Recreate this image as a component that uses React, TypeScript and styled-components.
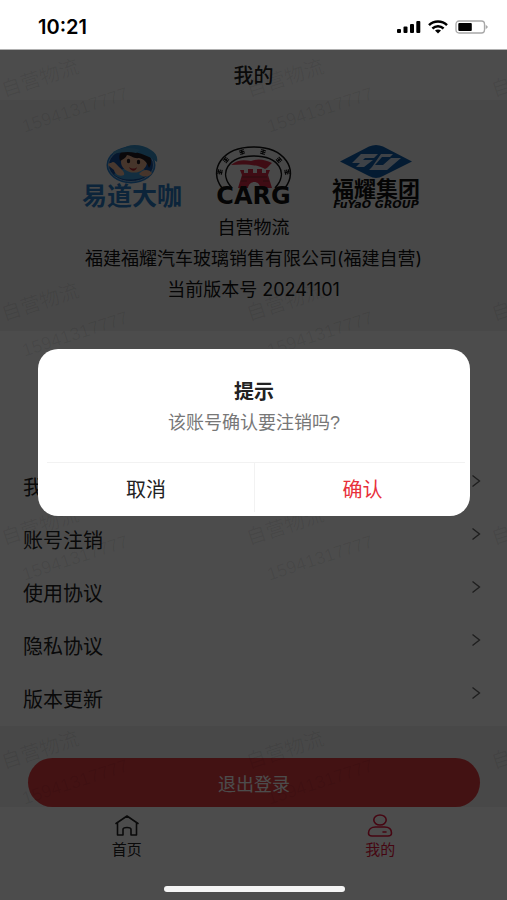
import React from "react";
import styled, { createGlobalStyle } from "styled-components";

const GlobalStyle = createGlobalStyle`
  *, *::before, *::after { box-sizing: border-box; }
  body {
    margin: 0;
    background: #fff;
    color: #222;
    font-family: "Liberation Sans", "Noto Sans CJK SC", sans-serif;
  }
  button { font-family: inherit; border: 0; background: none; padding: 0; cursor: pointer; }
`;

const Page = styled.div`
  min-height: 100vh;
  display: flex;
  flex-direction: column;
`;

const StatusBar = styled.header`
  height: 50px;
  padding: 4px 18px 0 38px;
  display: flex;
  align-items: center;
  justify-content: space-between;
  background: #fff;
  border-bottom: 1px solid #b0b0b0;
  color: #000;
`;

const Clock = styled.time`
  font: 600 20px/24px Inter, sans-serif;
`;

const StatusIcons = styled.div`
  display: flex;
  align-items: center;
  gap: 7px;
`;

const Screen = styled.div`
  position: relative;
  flex: 1;
  display: flex;
  flex-direction: column;
  overflow: hidden;
`;

const TitleBar = styled.h1`
  margin: 0;
  height: 50px;
  font-size: 20px;
  line-height: 52px;
  font-weight: 500;
  text-align: center;
`;

const Profile = styled.section`
  height: 231px;
  padding-top: 44px;
  background: #f1f1f1;
  text-align: center;
  color: #111;
`;

const Logos = styled.div`
  display: flex;
  justify-content: center;
  gap: 30px;
  height: 68px;
  svg { display: block; }
`;

const ProfileLine = styled.p`
  margin: 0;
  font-size: 18px;
  line-height: 31px;
  font-family: Inter, "Noto Sans CJK SC", sans-serif;
`;

const Menu = styled.nav`
  flex: 1;
  padding-top: 130px;
`;

const MenuItem = styled.button`
  width: 100%;
  height: 53px;
  padding: 0 26px 0 23px;
  display: flex;
  justify-content: space-between;
  align-items: center;
  font-size: 20px;
  line-height: 28px;
  color: #222;
  svg { margin-bottom: 14px; }
`;

const LogoutArea = styled.section`
  padding: 32px 27px 0 28px;
  background: #f1f1f1;
`;

const LogoutButton = styled.button`
  display: block;
  width: 100%;
  height: 49px;
  border-radius: 25px;
  background: #e23c40;
  color: #fff;
  font-size: 18px;
`;

const TabBar = styled.nav`
  height: 93px;
  padding-top: 7px;
  display: grid;
  grid-template-columns: 1fr 1fr;
  align-items: start;
`;

const Tab = styled.button<{ $active?: boolean }>`
  display: flex;
  flex-direction: column;
  align-items: center;
  gap: 2px;
  font-size: 15px;
  line-height: 20px;
  color: ${(p) => (p.$active ? "#e8143c" : "#222")};
`;

const Watermarks = styled.div`
  position: absolute;
  inset: 0;
  display: grid;
  grid-template-columns: repeat(3, 245px);
  grid-auto-rows: 224px;
  overflow: hidden;
  pointer-events: none;
  color: rgba(0, 0, 0, 0.07);
  font-size: 20px;
  line-height: 24px;
`;

const Watermark = styled.div`
  padding-top: 16px;
  display: flex;
  flex-direction: column;
  gap: 8px;
  span {
    width: max-content;
    transform: rotate(-18deg);
  }
  span + span { margin-left: 20px; font-size: 18px; }
`;

const Overlay = styled.div`
  position: absolute;
  inset: 0;
  padding: 0 37px 85px 38px;
  display: flex;
  align-items: center;
  background: rgba(0, 0, 0, 0.7);
`;

const Dialog = styled.section`
  width: 100%;
  padding: 28px 0 4px;
  border-radius: 20px;
  background: #fff;
  text-align: center;
`;

const DialogTitle = styled.h2`
  margin: 0;
  font-size: 20px;
  line-height: 30px;
  font-weight: 700;
`;

const DialogText = styled.p`
  margin: 1px 0 24px;
  font-size: 18px;
  line-height: 30px;
  color: #777;
`;

const DialogDivider = styled.hr`
  height: 1px;
  margin: 0 5px 0 9px;
  border: 0;
  background: #f2f2f2;
`;

const DialogActions = styled.div`
  display: grid;
  grid-template-columns: 1fr 1fr;
`;

const DialogButton = styled.button<{ $primary?: boolean }>`
  height: 49px;
  padding-top: 2px;
  font-size: 20px;
  color: ${(p) => (p.$primary ? "#e8303a" : "#222")};
  border-left: ${(p) => (p.$primary ? "1px solid #f2f2f2" : "0")};
`;

const HomeIndicator = styled.div`
  position: absolute;
  left: 50%;
  bottom: 8px;
  width: 181px;
  height: 6px;
  margin-left: -90px;
  border-radius: 3px;
  background: #f4f4f4;
`;

const SignalIcon = () => (
  <svg width="24" height="14" viewBox="0 0 24 14" aria-hidden="true">
    <rect x="0" y="9" width="4" height="4" rx="1" />
    <rect x="6.5" y="6.5" width="4" height="6.5" rx="1" />
    <rect x="13" y="4" width="4" height="9" rx="1" />
    <rect x="19.3" y="1" width="4" height="12" rx="1" />
  </svg>
);

const WifiIcon = () => (
  <svg width="20" height="14" viewBox="0 0 20 14" fill="none" stroke="#000" aria-hidden="true">
    <path d="M1 5.2C6 .4 14 .4 19 5.2" strokeWidth="2.5" />
    <path d="M4.4 8.5c3.2-3 8-3 11.2 0" strokeWidth="2.4" />
    <path d="M7 10.6c1.8-1.5 4.2-1.5 6 0l-3 2.8z" fill="#000" stroke="none" />
  </svg>
);

const BatteryIcon = () => (
  <svg width="34" height="14" viewBox="0 0 34 14" aria-hidden="true">
    <rect x="1" y="1" width="28.5" height="12" rx="3" fill="#fff" stroke="#a8a8a8" strokeWidth="1.3" />
    <rect x="3.3" y="3" width="13.5" height="8" rx="1" />
    <path d="M30.6 4.5 33 7l-2.4 2.5z" fill="#a8a8a8" />
  </svg>
);

const YidaoLogo = () => (
  <svg width="104" height="68" viewBox="0 0 104 68" role="img" aria-label="易道大咖">
    <ellipse cx="51" cy="21" rx="24.5" ry="18.5" fill="#2680d0" />
    <ellipse cx="51" cy="21" rx="22.5" ry="16.5" fill="#174e9c" stroke="#86b4dc" strokeWidth="1" />
    <path d="M34 30c4 7 28 8 35-1l-8-6-18 2z" fill="#409bd8" />
    <ellipse cx="54" cy="18" rx="13" ry="10.5" fill="#e9b391" />
    <path d="M40 17c-3-9 4-12 12-11l18 6c2 6 1 9-1 12-2-6-5-9-10-10-5 1-9-3-12-3-1 3-4 4-7 6z" fill="#241c22" />
    <path d="M41 6C48-1 62 0 71 6c5 3 7 7 6 12-9-7-21-11-36-12z" fill="#3690c8" />
    <path d="M33 8C41 3 52 3 60 6l-4 3c-7-2-15-1-23 1z" fill="#4c9cc9" />
    <ellipse cx="48.5" cy="17" rx="1.7" ry="2.2" fill="#241c22" />
    <ellipse cx="58.5" cy="18" rx="1.7" ry="2.2" fill="#241c22" />
    <path d="M49 23c3 2 6 2 8 0-1 5-6 5-8 0z" fill="#b42731" />
    <path d="M31 19c3-3 5 1 8 4s6 5 5 8c-5 2-9-1-10-5l-5-4c-2-2 0-3 2-3z" fill="#f0bd9d" />
    <path d="M59 30c4-5 10-5 13-1-2 4-8 5-13 1z" fill="#e9b391" />
    <text x="52" y="61" textAnchor="middle" fontSize="25" fontWeight="700" fontFamily="Noto Sans CJK SC, sans-serif" fill="#2b7bc2">易道大咖</text>
  </svg>
);

const RING_MARKS = [
  [6, 28, -80],
  [12, 16, -50],
  [28, 8, -20],
  [49, 8, 18],
  [65, 16, 48],
  [73, 28, 80],
];

const CargLogo = () => (
  <svg width="80" height="68" viewBox="0 0 80 68" role="img" aria-label="CARG">
    <g fill="none" stroke="#111" strokeWidth="1.5">
      <path d="M8 44C-6 26 8 3 39.5 3S85 26 71 44" />
      <path d="M18 44C4 29 14 12 39.5 12S75 29 61 44" />
    </g>
    {RING_MARKS.map(([x, y, r]) => (
      <g key={x} transform={`translate(${x} ${y}) rotate(${r})`} stroke="#111" strokeWidth="1.1">
        <path d="M-2.5-1.8h5M-2.5 0h5M-2.5 1.8h5M0-2.5v5" />
      </g>
    ))}
    <path d="M17 21c7-6 14-5 20-4 8-3 14-1 21 2-3 2-4 5-7 6-8-5-22-5-34-4z" fill="#d42b43" />
    <path d="M24 44l4-13-2-5h4v3h4v-4h5v4h4v-4h5v4h4v-3h4l-2 5 4 13H46c0-8-11-8-12 0z" fill="#d42b43" />
    <path d="M28 33h25M27 37h6m16 0h6" stroke="#8c2633" />
    <text x="39.5" y="60" textAnchor="middle" fontSize="24" fontWeight="700" fontFamily="DejaVu Sans, sans-serif" fill="#111">CARG</text>
  </svg>
);

const FuyaoLogo = () => (
  <svg width="104" height="68" viewBox="0 0 104 68" role="img" aria-label="福耀集团 FUYAO GROUP">
    <path d="M16 17.5 45 2.5q7-3 14 0l29 15L59 32q-7 4-14 0z" fill="#0f5ca8" />
    <path d="M37 10h17l-4 4h-9l-2 2h10l-9 7h-8l4-4h-8zM57 10h12l-3 3h-8l-7 8h8l8-7h10L63 26H45l3-3z" fill="#fff" opacity=".8" />
    <text x="52" y="53" textAnchor="middle" fontSize="22" fontWeight="700" fontFamily="Noto Sans CJK SC, sans-serif" fill="#111">福耀集团</text>
    <text x="52" y="64" textAnchor="middle" fontSize="11" fontWeight="700" fontStyle="italic" fontFamily="DejaVu Sans, sans-serif" fill="#111">FuYaO GROUP</text>
  </svg>
);

const ChevronIcon = () => (
  <svg width="10" height="14" viewBox="0 0 10 14" fill="none" stroke="#666" strokeWidth="1.4" aria-hidden="true">
    <path d="m1.5 1.5 7 5.5-7 5.5" />
  </svg>
);

const HomeIcon = () => (
  <svg width="26" height="24" viewBox="0 0 26 24" fill="none" stroke="currentColor" strokeWidth="1.6" strokeLinejoin="round" strokeLinecap="round" aria-hidden="true">
    <path d="M2 9.5 13 2 24 9.500M3.500 8.500V21H9v-5.500q0-2 4-2t4 2V21h5.500V8.500" />
  </svg>
);

const UserIcon = () => (
  <svg width="26" height="24" viewBox="0 0 26 24" fill="none" stroke="currentColor" strokeWidth="1.6" strokeLinecap="round" aria-hidden="true">
    <ellipse cx="13" cy="6" rx="6.2" ry="5" />
    <path d="M5 22h16q3.5 0 3.5-3c0-4-3-6-7-6h-9c-4 0-7 2-7 6q0 3 3.500 3zM16 18h3" />
  </svg>
);

const MENU_ITEMS = ["我的资料", "账号注销", "使用协议", "隐私协议", "版本更新"];

export default function App() {
  return (
    <>
      <GlobalStyle />
      <Page>
        <StatusBar>
          <Clock>10:21</Clock>
          <StatusIcons>
            <SignalIcon />
            <WifiIcon />
            <BatteryIcon />
          </StatusIcons>
        </StatusBar>
        <Screen>
          <TitleBar>我的</TitleBar>
          <Profile>
            <Logos>
              <YidaoLogo />
              <CargLogo />
              <FuyaoLogo />
            </Logos>
            <ProfileLine>自营物流</ProfileLine>
            <ProfileLine>福建福耀汽车玻璃销售有限公司(福建自营)</ProfileLine>
            <ProfileLine>当前版本号 20241101</ProfileLine>
          </Profile>
          <Menu>
            {MENU_ITEMS.map((label) => (
              <MenuItem key={label} type="button">
                {label}
                <ChevronIcon />
              </MenuItem>
            ))}
          </Menu>
          <LogoutArea>
            <LogoutButton type="button">退出登录</LogoutButton>
          </LogoutArea>
          <TabBar>
            <Tab type="button">
              <HomeIcon />
              首页
            </Tab>
            <Tab type="button" $active>
              <UserIcon />
              我的
            </Tab>
          </TabBar>
          <Watermarks aria-hidden="true">
            {Array.from({ length: 12 }, (_, i) => (
              <Watermark key={i}>
                <span>自营物流</span>
                <span>15941317777</span>
              </Watermark>
            ))}
          </Watermarks>
          <Overlay>
            <Dialog role="alertdialog" aria-modal="true" aria-labelledby="dialog-title" aria-describedby="dialog-text">
              <DialogTitle id="dialog-title">提示</DialogTitle>
              <DialogText id="dialog-text">该账号确认要注销吗?</DialogText>
              <DialogDivider />
              <DialogActions>
                <DialogButton type="button">取消</DialogButton>
                <DialogButton type="button" $primary>确认</DialogButton>
              </DialogActions>
            </Dialog>
          </Overlay>
          <HomeIndicator />
        </Screen>
      </Page>
    </>
  );
}
